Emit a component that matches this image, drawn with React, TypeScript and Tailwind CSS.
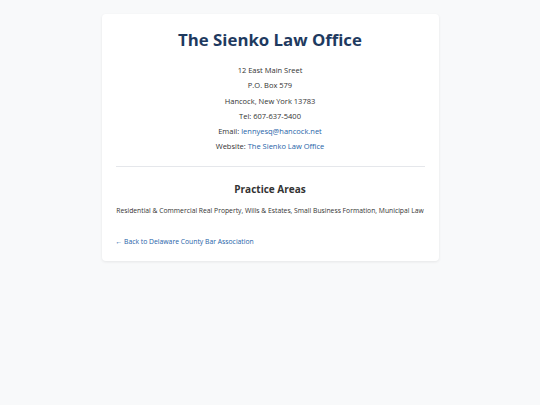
import React from 'react';

const App: React.FC = () => {
  return (
    <div className="min-h-screen bg-[#f8f9fa] pt-[14px] font-['Open_Sans',sans-serif]">
      <div className="mx-auto w-[337px] rounded-[4px] bg-white px-[14px] pt-[14px] pb-[13px] shadow-[0_1px_3px_rgba(0,0,0,0.08)]">
        <h1 className="text-center text-[16.8px] font-bold leading-[24px] text-[#1e3a5f]">The Sienko Law Office</h1>
        <div className="mt-[11px] text-center text-[7.5px] leading-[15.3px] text-[#333]">
          <p>12 East Main Sreet</p>
          <p>P.O. Box 579</p>
          <p>Hancock, New York 13783</p>
          <p>Tel: 607-637-5400</p>
          <p>
            Email: <a href="#" className="text-[#2563a8]">lennyesq@hancock.net</a>
          </p>
          <p>
            Website: <a href="#" className="text-[#2563a8]">The Sienko Law Office</a>
          </p>
        </div>
        <hr className="mt-[11px] border-t border-[#e5e7eb]" />
        <h2 className="mt-[14px] text-center text-[10px] font-bold leading-[16px] text-[#333]">Practice Areas</h2>
        <p className="-mx-[4px] mt-[8px] whitespace-nowrap text-center text-[6.78px] leading-[12px] text-[#333]">
          Residential &amp; Commercial Real Property, Wills &amp; Estates, Small Business Formation, Municipal Law
        </p>
        <div className="mt-[19px] text-[6.8px] leading-[12px]">
          <a href="#" className="text-[#2563a8]">← Back to Delaware County Bar Association</a>
        </div>
      </div>
    </div>
  );
};

export default App;
